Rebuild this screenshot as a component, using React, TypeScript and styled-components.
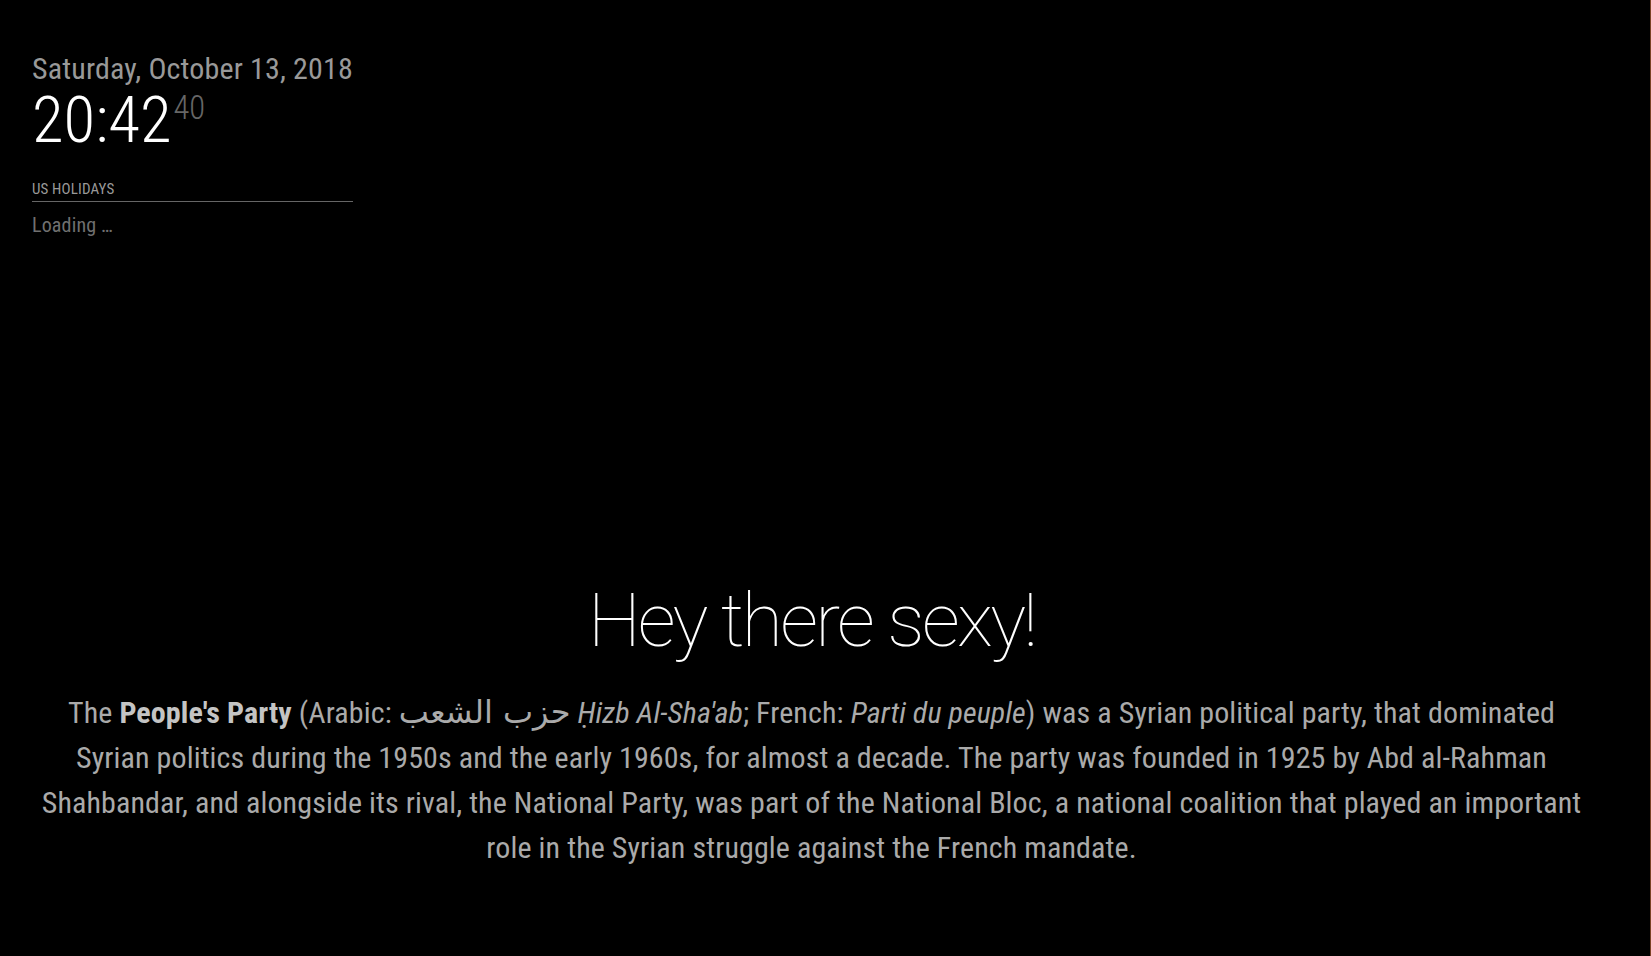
import React from "react";
import styled, { createGlobalStyle } from "styled-components";

const Global = createGlobalStyle`
  html, body { margin: 0; padding: 0; background: #000; }
  body {
    color: #aaa;
    font-family: "Roboto Condensed", Roboto, "Liberation Sans", sans-serif;
    font-weight: 400;
    letter-spacing: 0.15px;
    -webkit-font-smoothing: antialiased;
  }
`;

const Screen = styled.div`
  box-sizing: border-box;
  height: 956px;
  display: flex;
  flex-direction: column;
  padding: 51px 59px 86px 32px;
  border-right: 1px solid #7a4226;
  overflow: hidden;
`;

const TopLeft = styled.div`
  align-self: flex-start;
  display: flex;
  flex-direction: column;
`;

const DateLine = styled.div`
  font-size: 30px;
  line-height: 35px;
  color: #999;
`;

const Time = styled.div`
  font-size: 65px;
  line-height: 65px;
  font-weight: 300;
  color: #fff;
  margin-top: 2px;
  letter-spacing: 0;
`;

const Seconds = styled.sup`
  font-size: 50%;
  line-height: 50%;
  color: #666;
  margin-left: 2px;
`;

const Header = styled.header`
  margin-top: 29px;
  font-size: 15px;
  line-height: 15px;
  text-transform: uppercase;
  color: #999;
  padding-bottom: 4px;
  border-bottom: 1px solid #666;
  margin-bottom: 11px;
`;

const Loading = styled.div`
  font-size: 20px;
  line-height: 25px;
  color: #707070;
`;

const Bottom = styled.div`
  margin-top: auto;
  text-align: center;
  display: flex;
  flex-direction: column;
  gap: 32px;
`;

const Compliment = styled.div`
  font-family: "Roboto Thin", Roboto, sans-serif;
  font-weight: 100;
  font-size: 75px;
  line-height: 75px;
  letter-spacing: -2.7px;
  color: #fff;
`;

const Article = styled.div`
  font-size: 30px;
  line-height: 45px;
  letter-spacing: 0.1px;
  color: #aaa;
  b { font-weight: 700; color: #c4c4c4; }
  i { font-style: italic; }
`;

const Arabic = styled.span`
  font-family: "DejaVu Sans", "Noto Sans Arabic", sans-serif;
  font-size: 32px;
  letter-spacing: 0;
`;

export default function App() {
  return (
    <>
      <Global />
      <Screen>
        <TopLeft>
          <DateLine>Saturday, October 13, 2018</DateLine>
          <Time>
            20:42<Seconds>40</Seconds>
          </Time>
          <Header>US Holidays</Header>
          <Loading>Loading …</Loading>
        </TopLeft>
        <Bottom>
          <Compliment>Hey there sexy!</Compliment>
          <Article>
            The <b>People's Party</b> (Arabic: <Arabic lang="ar">حزب الشعب</Arabic>{" "}
            <i>Ḥizb Al-Sha'ab</i>; French: <i>Parti du peuple</i>) was a Syrian political party, that dominated
            Syrian politics during the 1950s and the early 1960s, for almost a decade. The party was founded in 1925 by
            Abd al-Rahman Shahbandar, and alongside its rival, the National Party, was part of the National Bloc, a
            national coalition that played an important role in the Syrian struggle against the French mandate.
          </Article>
        </Bottom>
      </Screen>
    </>
  );
}
